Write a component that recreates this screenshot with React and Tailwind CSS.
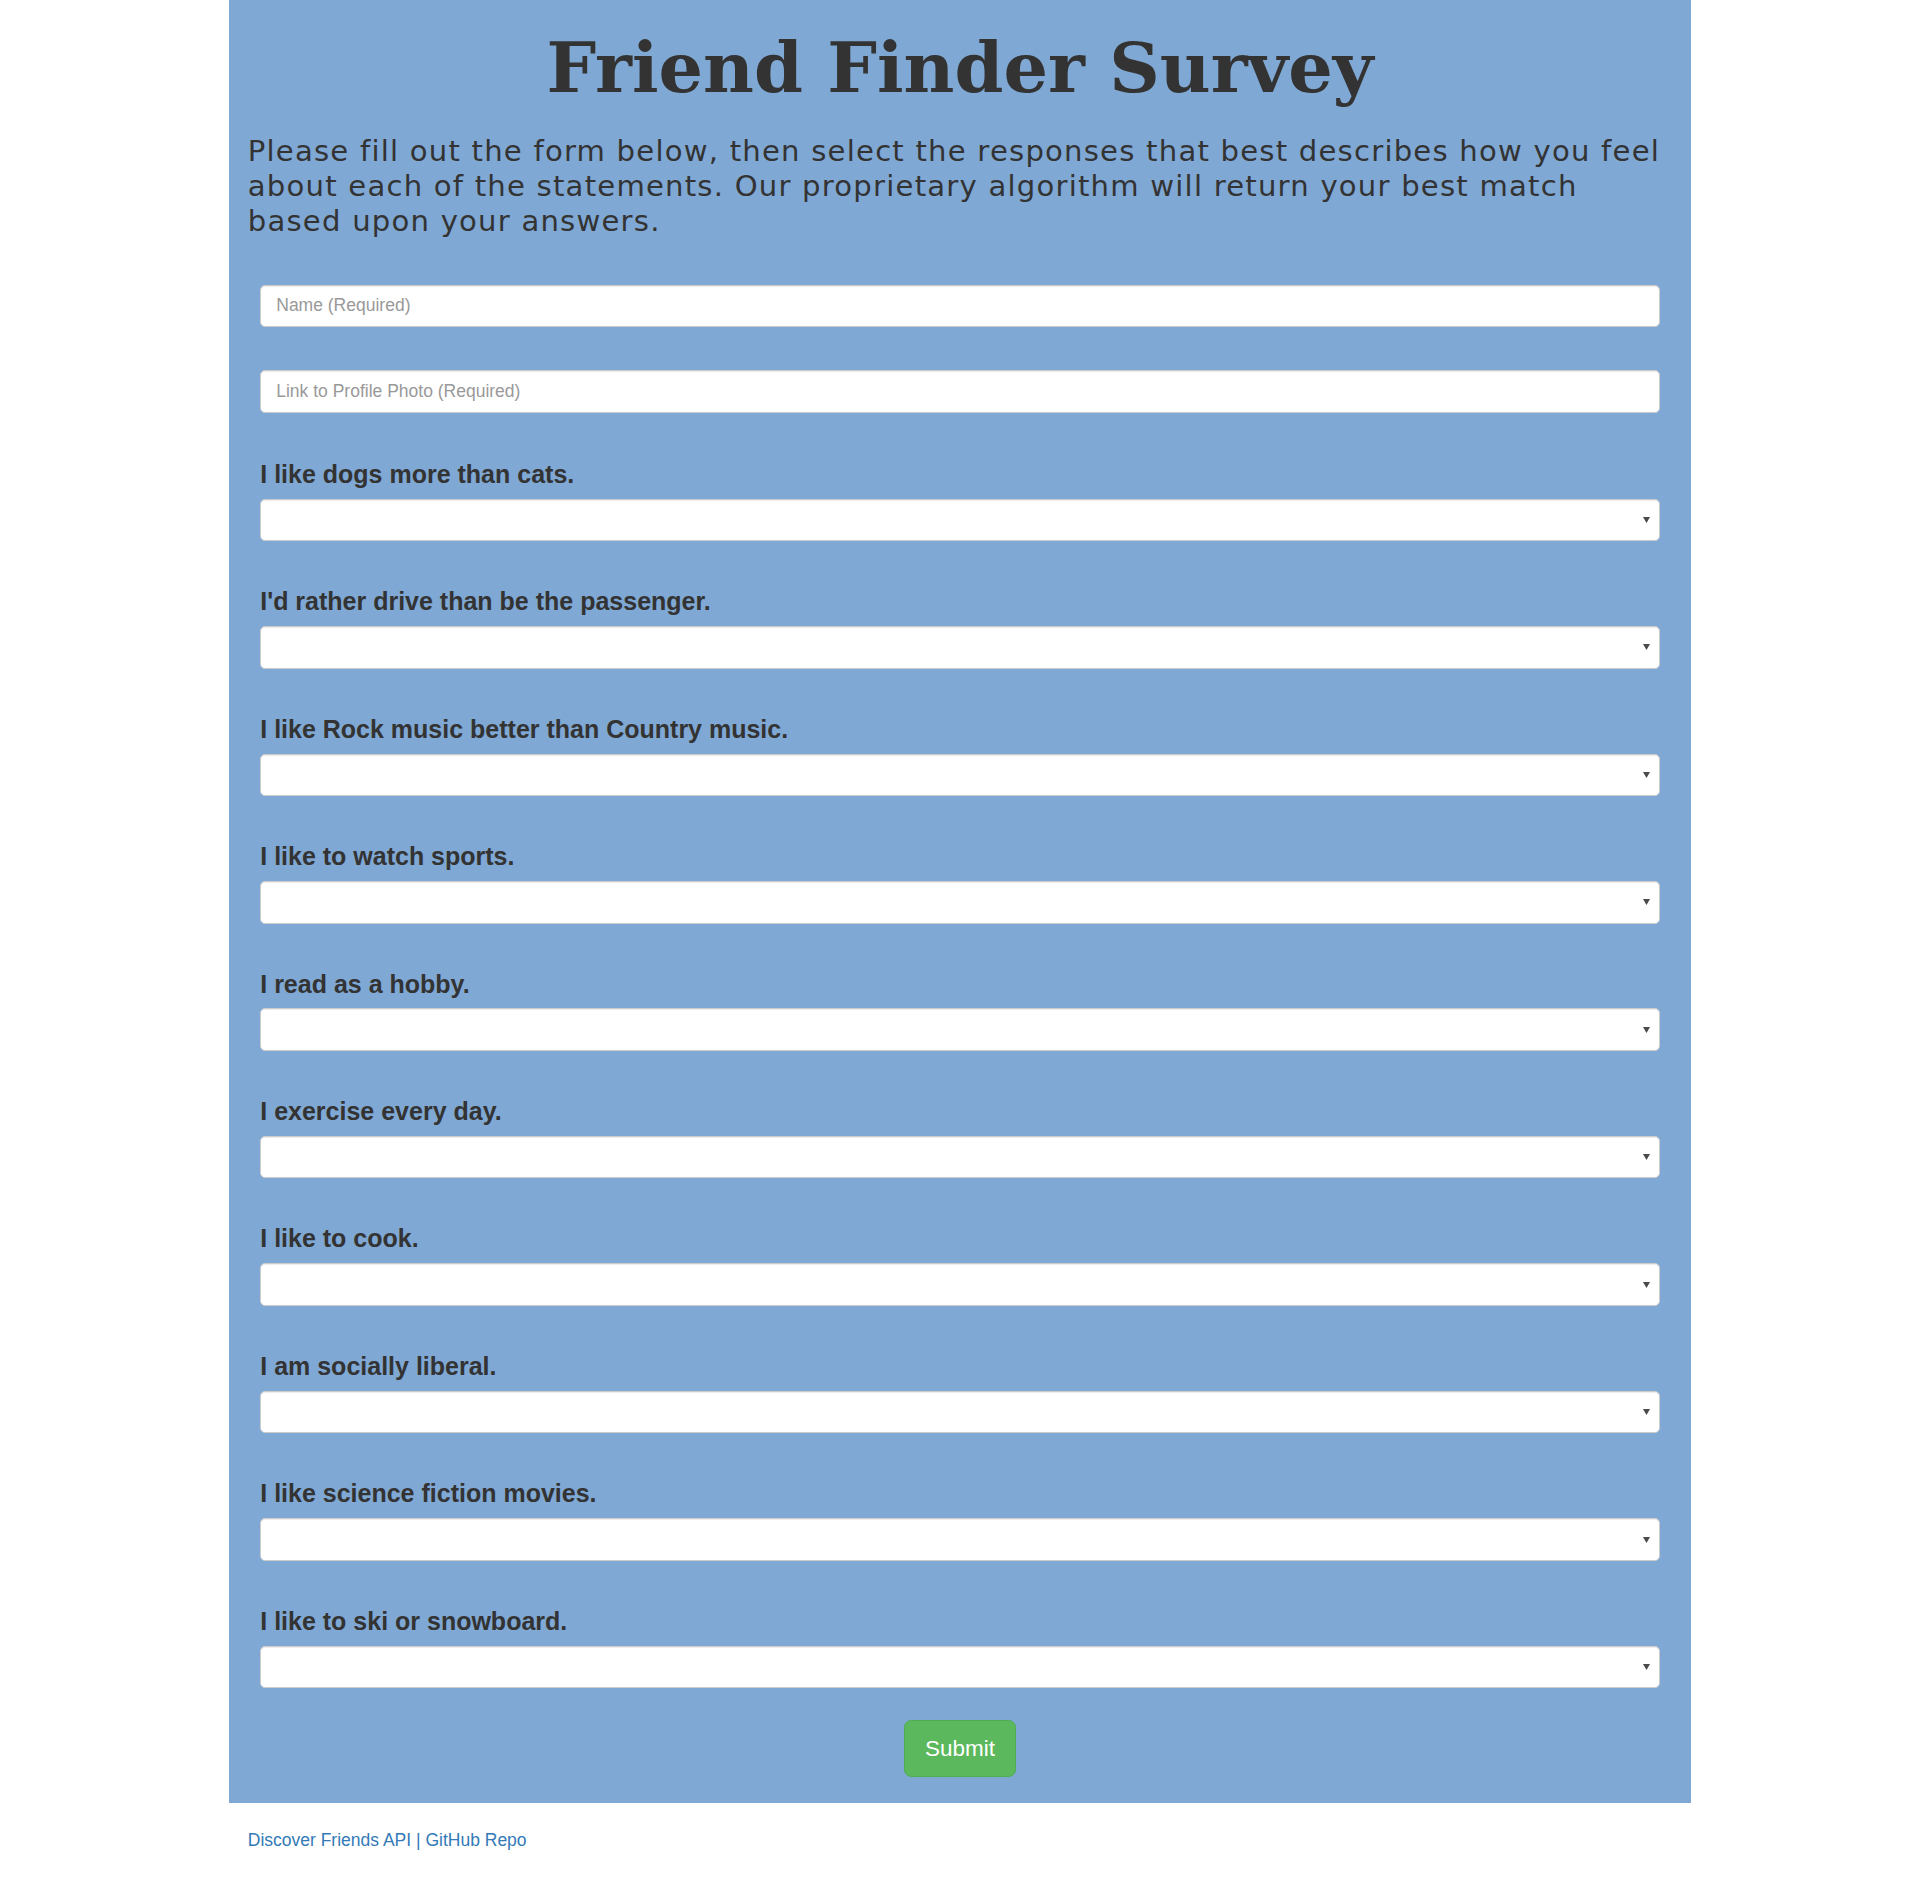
import React from 'react';

const questions = [
    'I like dogs more than cats.',
    "I'd rather drive than be the passenger.",
    'I like Rock music better than Country music.',
    'I like to watch sports.',
    'I read as a hobby.',
    'I exercise every day.',
    'I like to cook.',
    'I am socially liberal.',
    'I like science fiction movies.',
    'I like to ski or snowboard.',
];

const fieldClass =
    'block w-full h-[42.5px] bg-white border border-[#ccc] rounded-[5px] shadow-[inset_0_1px_1px_rgba(0,0,0,0.075)] px-[15px] text-[17.5px] text-[#555] placeholder:text-[#999] outline-none';

const Question = ({ text, id }) => (
    <div>
        <label htmlFor={id} className="inline-block font-bold text-[25px] leading-[37.7px] mb-[5.25px] text-[#333]">
            {text}
        </label>
        <div className="relative">
            <select id={id} defaultValue="" className={`${fieldClass} appearance-none`}>
                <option value=""></option>
                <option value="1">1 (Strongly Disagree)</option>
                <option value="2">2</option>
                <option value="3">3</option>
                <option value="4">4</option>
                <option value="5">5 (Strongly Agree)</option>
            </select>
            {/* dropdown arrow */}
            <svg className="absolute right-[10px] top-1/2 -translate-y-1/2 pointer-events-none" width="7" height="6" viewBox="0 0 7 6">
                <polygon points="0,0 7,0 3.5,6" fill="#4a4a4a" />
            </svg>
        </div>
    </div>
);

const App = () => {
    return (
        <div className="min-h-screen bg-white font-['Liberation_Sans',Arial,sans-serif] text-[#333]">
            {/* Survey panel */}
            <div className="mx-auto w-[1462px] bg-[#7fa8d4] px-[18.75px] pt-[33px] pb-[25.5px]">
                <h1 className="text-center font-['DejaVu_Serif',Georgia,serif] font-bold text-[70px] leading-none text-[#333]">
                    Friend Finder Survey
                </h1>
                <p className="mt-[31px] font-['DejaVu_Sans',Verdana,sans-serif] text-[29.1px] leading-[35px] tracking-[1.22px] text-[#333]">
                    Please fill out the form below, then select the responses that best describes how you feel about each of the statements. Our proprietary algorithm will return your best match based upon your answers.
                </p>

                <form className="mt-[45.7px] px-[12.5px]" onSubmit={(e) => e.preventDefault()}>
                    <div className="flex flex-col gap-[43px]">
                        <input type="text" placeholder="Name (Required)" className={fieldClass} />
                        <input type="text" placeholder="Link to Profile Photo (Required)" className={fieldClass} />
                        <div className="flex flex-col gap-[42px]">
                            {questions.map((q, i) => (
                                <Question key={i} text={q} id={`q${i + 1}`} />
                            ))}
                        </div>
                    </div>
                    <div className="flex justify-center mt-[32px]">
                        <button type="submit" className="bg-[#5cb85c] border border-[#4cae4c] rounded-[7.5px] px-[20px] py-[12.5px] text-[22.5px] leading-[1.3333] text-white">
                            Submit
                        </button>
                    </div>
                </form>
            </div>

            {/* Footer */}
            <div className="mx-auto w-[1462px] px-[18.75px] mt-[25.4px] text-[17.5px] leading-[25px] text-[#337ab7]">
                <a href="#">Discover Friends API</a> | <a href="#">GitHub Repo</a>
            </div>
        </div>
    );
};

export default App;
